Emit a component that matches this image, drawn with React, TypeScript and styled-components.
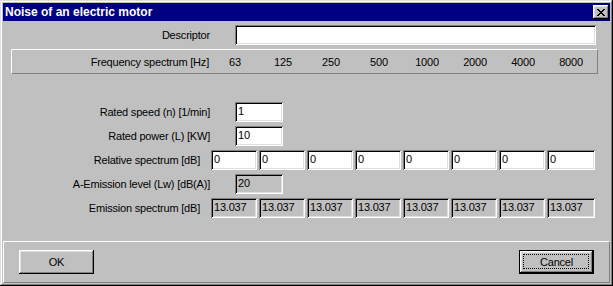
import React from 'react';
import styled, { createGlobalStyle } from 'styled-components';

const GlobalStyle = createGlobalStyle`
	html, body {
		margin: 0;
		padding: 0;
		background: #c0c0c0;
	}
	body {
		font-family: 'Liberation Sans', Arial, sans-serif;
		font-size: 11px;
		letter-spacing: -0.2px;
		color: #000;
	}
`;

const raised = 'inset -1px -1px #000, inset 1px 1px #fff, inset -2px -2px #808080, inset 2px 2px #dfdfdf';
const sunken = 'inset 1px 1px #808080, inset -1px -1px #fff, inset 2px 2px #000, inset -2px -2px #dfdfdf';

const Window = styled.div`
	box-sizing: border-box;
	width: 613px;
	height: 286px;
	padding: 3px;
	display: flex;
	flex-direction: column;
	background: #c0c0c0;
	box-shadow: inset -1px -1px #000, inset 1px 1px #dfdfdf, inset -2px -2px #808080, inset 2px 2px #fff;
`;

const TitleBar = styled.div`
	height: 18px;
	flex-shrink: 0;
	display: flex;
	align-items: center;
	justify-content: space-between;
	padding: 0 1px 0 2px;
	background: #000080;
`;

const Title = styled.span`
	color: #fff;
	font-weight: bold;
	font-size: 12px;
	letter-spacing: 0;
`;

const CloseButton = styled.button`
	width: 16px;
	height: 14px;
	padding: 0;
	border: 0;
	display: flex;
	align-items: center;
	justify-content: center;
	background: #c0c0c0;
	box-shadow: ${raised};
`;

const Content = styled.div`
	flex: 1;
	display: flex;
	flex-direction: column;
	padding-top: 4px;
`;

const Row = styled.div<{ $top?: number }>`
	display: flex;
	align-items: center;
	height: 20px;
	margin-top: ${(p) => p.$top ?? 4}px;
`;

const Label = styled.span<{ $spectrum?: boolean }>`
	box-sizing: border-box;
	width: ${(p) => (p.$spectrum ? 197 : 207)}px;
	margin-right: ${(p) => (p.$spectrum ? 11 : 25)}px;
	text-align: right;
	white-space: nowrap;
`;

const Field = styled.div<{ $width: number; $disabled?: boolean }>`
	box-sizing: border-box;
	width: ${(p) => p.$width}px;
	height: 20px;
	padding: 3px 0 0 3px;
	background: ${(p) => (p.$disabled ? '#c0c0c0' : '#fff')};
	box-shadow: ${sunken};
	white-space: nowrap;
	overflow: hidden;
`;

const Spectrum = styled.div`
	display: flex;
	gap: 2px;
`;

const Group = styled.div`
	box-sizing: border-box;
	display: flex;
	align-items: center;
	width: 587px;
	height: 25px;
	margin: 4px 0 0 8px;
	border-top: 1px solid #fff;
	border-left: 1px solid #fff;
	border-bottom: 1px solid #808080;
	border-right: 1px solid #808080;
`;

const GroupLabel = styled.span`
	width: 197px;
	margin-right: 2px;
	text-align: right;
	white-space: nowrap;
`;

const Freq = styled.span`
	width: 48px;
	text-align: center;
`;

const ButtonPanel = styled.div`
	box-sizing: border-box;
	height: 42px;
	flex-shrink: 0;
	margin-top: auto;
	display: flex;
	justify-content: space-between;
	align-items: flex-start;
	padding: 8px 15px 0 15px;
	border-top: 1px solid #fff;
	border-left: 1px solid #fff;
	border-bottom: 1px solid #808080;
	border-right: 1px solid #808080;
`;

const Button = styled.button<{ $default?: boolean }>`
	position: relative;
	box-sizing: border-box;
	width: 75px;
	height: 24px;
	padding: 0;
	border: 0;
	font-family: 'Liberation Sans', Arial, sans-serif;
	font-size: 11px;
	letter-spacing: -0.2px;
	color: #000;
	background: #c0c0c0;
	box-shadow: ${(p) =>
		p.$default
			? 'inset 0 0 0 1px #000, inset -2px -2px #000, inset 2px 2px #fff, inset -3px -3px #808080, inset 3px 3px #dfdfdf'
			: raised};
`;

const Focus = styled.span`
	position: absolute;
	inset: 4px 5px 5px 4px;
	border: 1px dotted #000;
`;

const CloseIcon = () => (
	<svg width='8' height='7' viewBox='0 0 8 7' shapeRendering='crispEdges'>
		<path
			d='M0 0h2v1H0zM6 0h2v1H6zM1 1h2v1H1zM5 1h2v1H5zM2 2h4v1H2zM3 3h2v1H3zM2 4h4v1H2zM1 5h2v1H1zM5 5h2v1H5zM0 6h2v1H0zM6 6h2v1H6z'
			fill='#000'
		/>
	</svg>
);

const frequencies = ['63', '125', '250', '500', '1000', '2000', '4000', '8000'];
const relative = ['0', '0', '0', '0', '0', '0', '0', '0'];
const emission = frequencies.map(() => '13.037');

export default function App() {
	return (
		<>
			<GlobalStyle />
			<Window>
				<TitleBar>
					<Title>Noise of an electric motor</Title>
					<CloseButton>
						<CloseIcon />
					</CloseButton>
				</TitleBar>
				<Content>
					<Row $top={0}>
						<Label>Descriptor</Label>
						<Field $width={361} />
					</Row>
					<Group>
						<GroupLabel>Frequency spectrum [Hz]</GroupLabel>
						{frequencies.map((f) => (
							<Freq key={f}>{f}</Freq>
						))}
					</Group>
					<Row $top={28}>
						<Label>Rated speed (n) [1/min]</Label>
						<Field $width={48}>1</Field>
					</Row>
					<Row>
						<Label>Rated power (L) [KW]</Label>
						<Field $width={48}>10</Field>
					</Row>
					<Row>
						<Label $spectrum>Relative spectrum [dB]</Label>
						<Spectrum>
							{relative.map((v, i) => (
								<Field key={i} $width={i === 7 ? 48 : 46}>
									{v}
								</Field>
							))}
						</Spectrum>
					</Row>
					<Row>
						<Label>A-Emission level (Lw) [dB(A)]</Label>
						<Field $width={48} $disabled>
							20
						</Field>
					</Row>
					<Row>
						<Label $spectrum>Emission spectrum [dB]</Label>
						<Spectrum>
							{emission.map((v, i) => (
								<Field key={i} $width={i === 7 ? 48 : 46} $disabled>
									{v}
								</Field>
							))}
						</Spectrum>
					</Row>
					<ButtonPanel>
						<Button>OK</Button>
						<Button $default>
							Cancel
							<Focus />
						</Button>
					</ButtonPanel>
				</Content>
			</Window>
		</>
	);
}
